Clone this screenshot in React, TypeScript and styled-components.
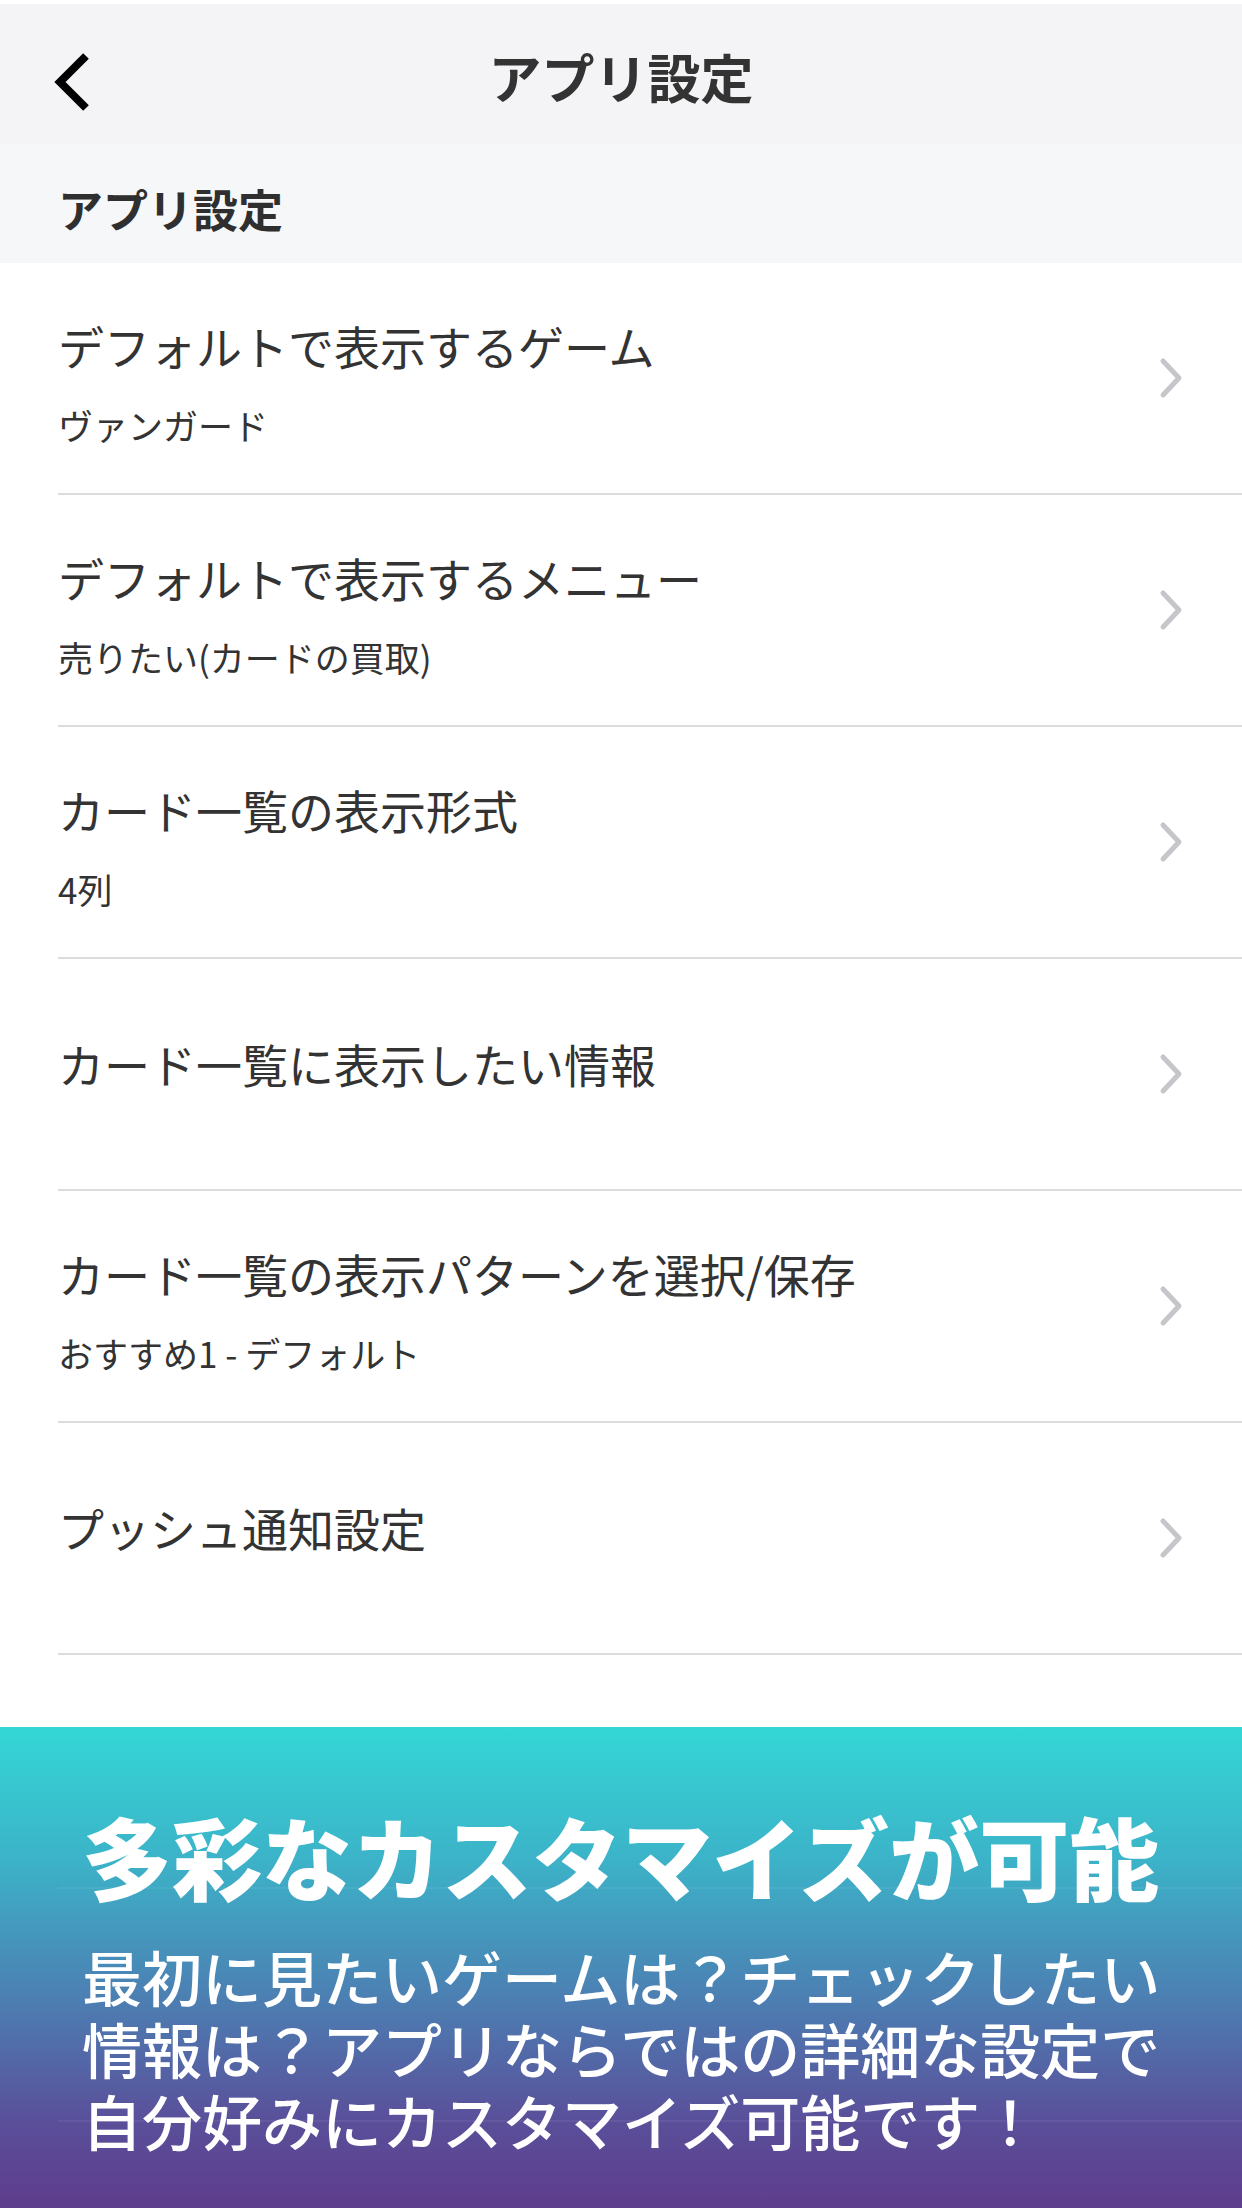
import React from 'react';
import styled, { createGlobalStyle } from 'styled-components';

const GlobalStyle = createGlobalStyle`
  html, body {
    margin: 0;
    padding: 0;
    background: #ffffff;
  }
  body {
    font-family: "Noto Sans CJK JP", "Noto Sans", sans-serif;
    color: #333333;
  }
`;

type SettingItem = { title: string; value?: string };

const settings: SettingItem[] = [
  { title: 'デフォルトで表示するゲーム', value: 'ヴァンガード' },
  { title: 'デフォルトで表示するメニュー', value: '売りたい(カードの買取)' },
  { title: 'カード一覧の表示形式', value: '4列' },
  { title: 'カード一覧に表示したい情報' },
  { title: 'カード一覧の表示パターンを選択/保存', value: 'おすすめ1 - デフォルト' },
  { title: 'プッシュ通知設定' },
];

const BackIcon: React.FC = () => (
  <svg width="42" height="62" viewBox="0 0 42 62" fill="none">
    <path d="M36 5 L10 31 L36 57" stroke="#000000" strokeWidth="8" strokeLinejoin="miter" />
  </svg>
);

const ChevronIcon: React.FC = () => (
  <svg width="26" height="42" viewBox="0 0 26 42" fill="none">
    <path d="M5 4 L21 21 L5 38" stroke="#c6c6ca" strokeWidth="5" strokeLinecap="round" strokeLinejoin="round" />
  </svg>
);

const App: React.FC = () => {
  return (
    <StyledPage>
      <GlobalStyle />
      <NavBar>
        <BackButton aria-label="戻る">
          <BackIcon />
        </BackButton>
        <NavTitle>アプリ設定</NavTitle>
        <span />
      </NavBar>

      <SectionHeader>アプリ設定</SectionHeader>

      <List>
        {settings.map((item) => (
          <Row key={item.title}>
            <RowInner>
              <Texts $single={!item.value}>
                <RowTitle>{item.title}</RowTitle>
                {item.value && <RowValue>{item.value}</RowValue>}
              </Texts>
              <ChevronIcon />
            </RowInner>
          </Row>
        ))}
      </List>

      <Banner>
        <BannerHeading>多彩なカスタマイズが可能</BannerHeading>
        <BannerBody>
          最初に見たいゲームは？チェックしたい
          <br />
          情報は？アプリならではの詳細な設定で
          <br />
          自分好みにカスタマイズ可能です！
        </BannerBody>
      </Banner>
    </StyledPage>
  );
};

const StyledPage = styled.div`
  width: 1242px;
  height: 2208px;
  overflow: hidden;
  display: flex;
  flex-direction: column;
  background: #ffffff;
  padding-top: 4px;
  box-sizing: border-box;
`;

const NavBar = styled.header`
  height: 140px;
  flex-shrink: 0;
  display: grid;
  grid-template-columns: 1fr auto 1fr;
  align-items: center;
  background: #f4f3f6;
`;

const BackButton = styled.button`
  justify-self: start;
  display: flex;
  align-items: center;
  margin-left: 50px;
  margin-top: 16px;
  padding: 0;
  border: none;
  background: transparent;
`;

const NavTitle = styled.h1`
  margin: 4px 0 0;
  font-size: 53px;
  line-height: 64px;
  font-weight: 700;
  color: #333333;
`;

const SectionHeader = styled.h2`
  margin: 0;
  height: 119px;
  flex-shrink: 0;
  box-sizing: border-box;
  padding: 37px 0 0 58px;
  font-size: 45px;
  line-height: 56px;
  font-weight: 700;
  color: #2f2f2f;
  background: #f6f7f9;
`;

const List = styled.ul`
  list-style: none;
  margin: 0;
  padding: 0;
`;

const Row = styled.li`
  padding-left: 58px;
`;

const RowInner = styled.div`
  height: 232px;
  box-sizing: border-box;
  display: flex;
  align-items: center;
  padding-right: 58px;
  border-bottom: 2px solid #dcdcde;
`;

const Texts = styled.div<{ $single: boolean }>`
  flex: 1;
  display: flex;
  flex-direction: column;
  gap: 30px;
  margin-top: ${(p) => (p.$single ? '-22px' : '8px')};
`;

const RowTitle = styled.div`
  font-size: 46px;
  line-height: 56px;
  color: #333333;
`;

const RowValue = styled.div`
  font-size: 35px;
  line-height: 44px;
  color: #333333;
`;

const Banner = styled.section`
  margin-top: 72px;
  flex: 1;
  box-sizing: border-box;
  padding: 74px 40px 0 82px;
  color: #ffffff;
  background:
    linear-gradient(rgba(255, 255, 255, 0.06), rgba(255, 255, 255, 0.06)) 58px 160px / 100% 2px no-repeat,
    linear-gradient(rgba(255, 255, 255, 0.06), rgba(255, 255, 255, 0.06)) 58px 393px / 100% 2px no-repeat,
    linear-gradient(180deg, #34d7d6 0%, #3cb2c8 28%, #4d7cb1 58%, #5a4f9a 82%, #5e3d8d 100%);
`;

const BannerHeading = styled.h3`
  margin: 0;
  font-size: 90px;
  line-height: 108px;
  font-weight: 900;
  white-space: nowrap;
`;

const BannerBody = styled.p`
  margin: 31px 0 0;
  font-size: 60px;
  line-height: 72px;
  font-weight: 500;
  white-space: nowrap;
`;

export default App;
